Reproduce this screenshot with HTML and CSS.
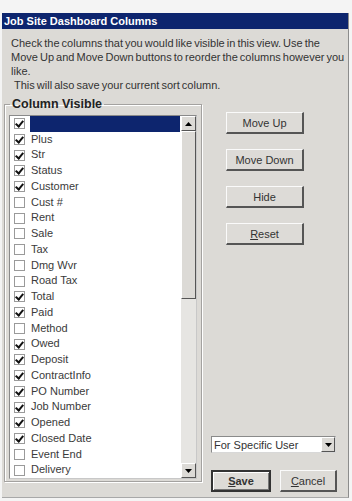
FILE: index.html
```html
<!DOCTYPE html>
<html>
<head>
<meta charset="utf-8">
<link rel="stylesheet" href="styles.css">
</head>
<body>
<div class="win">
  <div class="title">Job Site Dashboard Columns</div>
  <div class="intro">
    <p>Check the columns that you would like visible in this view. Use the Move Up and Move Down buttons to reorder the columns however you like.</p>
    <p class="indent">This will also save your current sort column.</p>
  </div>
  <div class="main">
    <fieldset class="group">
      <legend>Column Visible</legend>
      <div class="listbox">
        <div class="rows">
          <div class="row sel"><span class="cb on"></span><span class="lbl"></span></div>
          <div class="row"><span class="cb on"></span><span class="lbl">Plus</span></div>
          <div class="row"><span class="cb on"></span><span class="lbl">Str</span></div>
          <div class="row"><span class="cb on"></span><span class="lbl">Status</span></div>
          <div class="row"><span class="cb on"></span><span class="lbl">Customer</span></div>
          <div class="row"><span class="cb"></span><span class="lbl">Cust #</span></div>
          <div class="row"><span class="cb"></span><span class="lbl">Rent</span></div>
          <div class="row"><span class="cb"></span><span class="lbl">Sale</span></div>
          <div class="row"><span class="cb"></span><span class="lbl">Tax</span></div>
          <div class="row"><span class="cb"></span><span class="lbl">Dmg Wvr</span></div>
          <div class="row"><span class="cb"></span><span class="lbl">Road Tax</span></div>
          <div class="row"><span class="cb on"></span><span class="lbl">Total</span></div>
          <div class="row"><span class="cb on"></span><span class="lbl">Paid</span></div>
          <div class="row"><span class="cb"></span><span class="lbl">Method</span></div>
          <div class="row"><span class="cb on"></span><span class="lbl">Owed</span></div>
          <div class="row"><span class="cb on"></span><span class="lbl">Deposit</span></div>
          <div class="row"><span class="cb on"></span><span class="lbl">ContractInfo</span></div>
          <div class="row"><span class="cb on"></span><span class="lbl">PO Number</span></div>
          <div class="row"><span class="cb on"></span><span class="lbl">Job Number</span></div>
          <div class="row"><span class="cb on"></span><span class="lbl">Opened</span></div>
          <div class="row"><span class="cb on"></span><span class="lbl">Closed Date</span></div>
          <div class="row"><span class="cb"></span><span class="lbl">Event End</span></div>
          <div class="row"><span class="cb"></span><span class="lbl">Delivery</span></div>
        </div>
        <div class="vscroll">
          <div class="sbtn"><svg width="7" height="4" viewBox="0 0 7 4"><path d="M0 4L3.5 0L7 4Z" fill="#000"/></svg></div>
          <div class="thumb"></div>
          <div class="track"></div>
          <div class="sbtn"><svg width="7" height="4" viewBox="0 0 7 4"><path d="M0 0L3.5 4L7 0Z" fill="#000"/></svg></div>
        </div>
      </div>
    </fieldset>
    <div class="side">
      <div class="btns">
        <button class="btn">Move Up</button>
        <button class="btn">Move Down</button>
        <button class="btn">Hide</button>
        <button class="btn"><u>R</u>eset</button>
      </div>
      <div class="bottom">
        <div class="combo">
          <span class="ctext">For Specific User</span>
          <span class="carrow"><svg width="7" height="4" viewBox="0 0 7 4"><path d="M0 0L3.5 4L7 0Z" fill="#000"/></svg></span>
        </div>
        <div class="actions">
          <button class="btn save"><u>S</u>ave</button>
          <button class="btn cancel"><u>C</u>ancel</button>
        </div>
      </div>
    </div>
  </div>
</div>
</body>
</html>
```

FILE: styles.css
```css
html, body {
  margin: 0;
  padding: 0;
  background: #f4f4f4;
}
body {
  font-family: "Liberation Sans", Arial, sans-serif;
  font-size: 11px;
  color: #2a2a2a;
}
.win {
  margin: 13px 0 0 2px;
  width: 346px;
  height: 484px;
  background: #dcdad6;
  border-right: 1px solid #8c8c8c;
  border-bottom: 1px solid #a8a8a8;
  display: flex;
  flex-direction: column;
}
.title {
  height: 16px;
  line-height: 16px;
  background: #0d256e;
  color: #fff;
  font-weight: bold;
  font-size: 11px;
  padding-left: 2px;
}
.intro {
  padding: 7px 1px 0 9px;
}
.intro p {
  margin: 0;
  line-height: 14px;
  word-spacing: -1px;
  color: #333;
}
.intro .indent {
  padding-left: 3px;
}
.main {
  flex: 1;
  display: flex;
  margin-top: 5px;
}
.group {
  align-self: flex-start;
  margin: 0 0 0 2px;
  padding: 0 4px 2px 4px;
  width: 188px;
  border: 1px solid #a4a2a0;
  box-shadow: inset 1px 1px 0 #fff, 1px 1px 0 #fff;
}
.group legend {
  font-weight: bold;
  font-size: 12.5px;
  line-height: 14px;
  padding: 0 2px;
  margin-left: 1px;
  color: #222;
}
.listbox {
  margin-top: 4px;
  height: 362px;
  background: #fff;
  border: 1px solid #8a8a8a;
  border-right-color: #c8c8c8;
  border-bottom-color: #c8c8c8;
  display: flex;
}
.rows {
  flex: 1;
  display: flex;
  flex-direction: column;
}
.row {
  height: 15.75px;
  display: flex;
  align-items: center;
}
.cb {
  width: 9px;
  height: 9px;
  border: 1px solid #9a9a9a;
  background: #fff;
  margin-left: 4px;
  margin-right: 5px;
  position: relative;
  flex: none;
}
.cb.on::after {
  content: "";
  position: absolute;
  left: 2px;
  top: 0px;
  width: 3px;
  height: 6px;
  border-right: 2px solid #111;
  border-bottom: 2px solid #111;
  transform: rotate(40deg);
}
.lbl {
  flex: 1;
  height: 100%;
  line-height: 15.75px;
  color: #3a3a3a;
  padding-left: 1px;
}
.row.sel .lbl {
  background: #0d256e;
  margin-right: 1px;
}
.vscroll {
  width: 15px;
  display: flex;
  flex-direction: column;
  background: #e6e5e2;
}
.sbtn {
  height: 13px;
  background: #dcdad6;
  border-top: 1px solid #fff;
  border-left: 1px solid #fff;
  border-right: 1px solid #555;
  border-bottom: 1px solid #555;
  display: flex;
  align-items: center;
  justify-content: center;
  box-sizing: content-box;
  width: 13px;
}
.thumb {
  height: 166px;
  background: #dcdad6;
  border-top: 1px solid #fff;
  border-left: 1px solid #fff;
  border-right: 1px solid #555;
  border-bottom: 1px solid #555;
}
.track {
  flex: 1;
}
.side {
  flex: 1;
  display: flex;
  flex-direction: column;
  justify-content: space-between;
  padding-bottom: 5px;
}
.btns {
  display: flex;
  flex-direction: column;
  gap: 15px;
  padding-left: 24px;
  padding-top: 15px;
}
.btn {
  font-family: "Liberation Sans", Arial, sans-serif;
  font-size: 11px;
  color: #333;
  background: #dddbd7;
  border-top: 1px solid #fafafa;
  border-left: 1px solid #fafafa;
  border-right: 2px solid #555;
  border-bottom: 2px solid #555;
  padding: 0;
  margin: 0;
  height: 22px;
  width: 78px;
}
.bottom {
  padding-left: 9px;
  display: flex;
  flex-direction: column;
  gap: 17px;
}
.combo {
  width: 123px;
  height: 15px;
  background: #fff;
  border: 1px solid #8a8a8a;
  border-right-color: #d8d8d8;
  border-bottom-color: #d8d8d8;
  display: flex;
  align-items: center;
}
.ctext {
  flex: 1;
  padding-left: 2px;
  color: #333;
}
.carrow {
  width: 12px;
  height: 13px;
  background: #dcdad6;
  border-top: 1px solid #fff;
  border-left: 1px solid #fff;
  border-right: 1px solid #555;
  border-bottom: 1px solid #555;
  display: flex;
  align-items: center;
  justify-content: center;
}
.actions {
  display: flex;
  gap: 9px;
}
.save {
  width: 60px;
  font-weight: bold;
  border: 2px solid #333;
  box-shadow: inset 1px 1px 0 #fff, inset -1px -1px 0 #777;
}
.cancel {
  width: 57px;
}
```
